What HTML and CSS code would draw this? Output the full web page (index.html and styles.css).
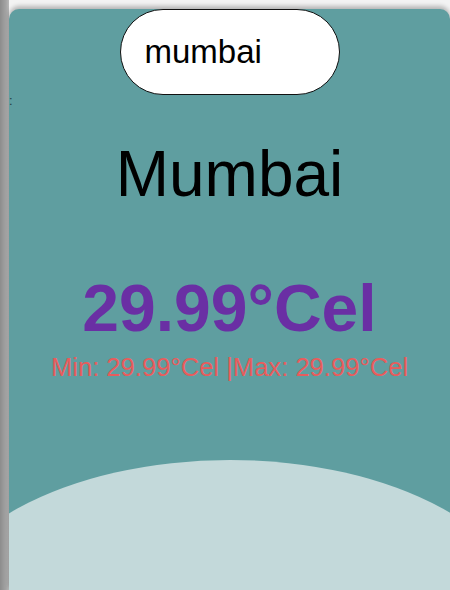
FILE: index.html
```html
<!DOCTYPE html>
<html>
<head>
<meta charset="utf-8">
<link rel="stylesheet" href="styles.css">
</head>
<body>
<div class="card">
  <span class="stray">:</span>
  <input class="search" type="search" value="mumbai">
  <h1 class="city">Mumbai</h1>
  <div class="temp">29.99°Cel</div>
  <div class="range">Min: 29.99°Cel |Max: 29.99°Cel</div>
  <div class="wave"></div>
</div>
</body>
</html>
```
FILE: styles.css
```css
html, body {
  margin: 0;
  height: 100%;
}
body {
  background: linear-gradient(to right, #8c8c8c 0, #a4a4a4 6px, #b8b8b8 9px, #f3f3f3 9px);
  font-family: "Liberation Sans", Arial, sans-serif;
  overflow: hidden;
}
.card {
  position: relative;
  margin: 9px 0 0 9px;
  height: 581px;
  background: #5f9ea0;
  border-radius: 10px 10px 0 0;
  box-shadow: 0 -3px 4px rgba(0,0,0,0.25);
  overflow: hidden;
  display: flex;
  flex-direction: column;
  align-items: center;
}
.stray {
  position: absolute;
  left: 0;
  top: 84px;
  font-size: 13px;
  color: #1d3a44;
}
.search {
  box-sizing: border-box;
  width: 220px;
  height: 86px;
  margin: 0;
  border: 1.5px solid #111;
  border-radius: 43px;
  background: #fff;
  padding: 0 0 0 24px;
  font-family: "Liberation Sans", Arial, sans-serif;
  font-size: 33px;
  color: #000;
  outline: none;
  -webkit-appearance: none;
  appearance: none;
}
.city {
  margin: 47px 0 0;
  font-size: 64px;
  line-height: 1;
  font-weight: normal;
  color: #000;
}
.temp {
  margin-top: 69px;
  font-size: 66px;
  line-height: 1;
  font-weight: bold;
  color: #6a2fa4;
}
.range {
  margin-top: 14px;
  font-size: 25.6px;
  line-height: 1;
  color: #e85c5c;
}
.wave {
  position: absolute;
  left: -79px;
  top: 451px;
  width: 600px;
  height: 330px;
  border-radius: 50%;
  background: #c3d9da;
}
```
